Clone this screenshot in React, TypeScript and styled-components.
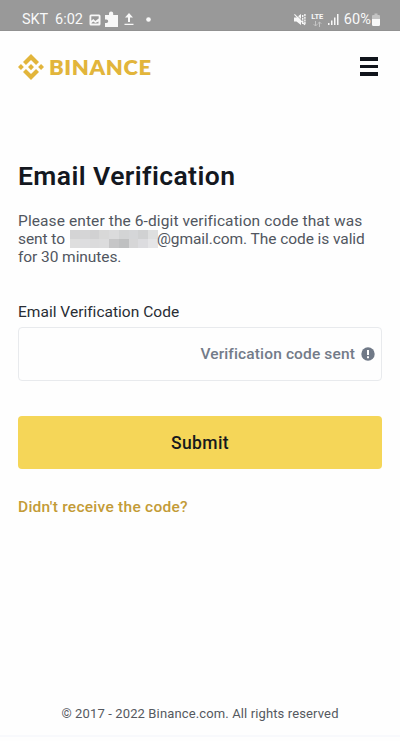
import React from 'react';
import styled, { createGlobalStyle } from 'styled-components';

const GlobalStyle = createGlobalStyle`
  * { box-sizing: border-box; }
  body { margin: 0; background: #fefefe; font-family: Roboto, "Noto Sans", sans-serif; }
`;

const Screen = styled.div`
  display: flex;
  flex-direction: column;
  width: 400px;
  height: 741px;
  overflow: hidden;
  background: #fefefe;
`;

const StatusBar = styled.div`
  display: flex;
  justify-content: space-between;
  flex: none;
  height: 31px;
  padding: 8px 20px 0 22px;
  background: #999;
  color: #f8f8f8;
  border-bottom: 1px solid #919191;
`;

const StatusGroup = styled.div`
  display: flex;
  align-items: center;
  height: 23px;
  white-space: nowrap;
`;

const StatusText = styled.span<{ $gap?: number; $spacing?: number }>`
  font-size: 14.5px;
  line-height: 20px;
  letter-spacing: ${p => p.$spacing ?? 0}px;
  margin-right: ${p => p.$gap ?? 0}px;
`;

const StatusIcon = styled.svg<{ $gap?: number }>`
  display: block;
  flex: none;
  margin-right: ${p => p.$gap ?? 0}px;
`;

const Network = styled.div`
  display: flex;
  flex-direction: column;
  align-items: center;
  width: 13px;
  margin-right: 4px;
  font-size: 7.5px;
  font-weight: 700;
  line-height: 8px;
`;

const Header = styled.header`
  display: flex;
  align-items: center;
  justify-content: space-between;
  flex: none;
  height: 71px;
  padding: 0 22px 0 18px;
`;

const Brand = styled.div`
  display: flex;
  align-items: center;
  gap: 4.5px;
  color: #e2b53b;
`;

const BrandName = styled.span`
  font-family: Lato, sans-serif;
  font-weight: 800;
  font-size: 20px;
  line-height: 26px;
  letter-spacing: 0.55px;
  transform: scaleX(1.1);
  transform-origin: left center;
`;

const MenuButton = styled.button`
  display: flex;
  flex-direction: column;
  gap: 4px;
  width: 18px;
  padding: 0;
  border: 0;
  background: none;
`;

const MenuLine = styled.span`
  height: 3.5px;
  background: #10141b;
`;

const Main = styled.main`
  display: flex;
  flex-direction: column;
  flex: 1;
  padding: 58px 18px 0;
`;

const Title = styled.h1`
  margin: 0 0 20px;
  color: #14181f;
  font-size: 26.5px;
  font-weight: 600;
  line-height: 32px;
  letter-spacing: 0.42px;
  white-space: nowrap;
`;

const Description = styled.p`
  margin: 0 0 36px;
  color: #515660;
  font-size: 15.5px;
  line-height: 18px;
`;

const Line = styled.span<{ $spacing: number }>`
  display: flex;
  align-items: center;
  height: 18px;
  white-space: pre;
  letter-spacing: ${p => p.$spacing}px;
`;

const Mosaic = styled.span`
  display: grid;
  grid-template-columns: repeat(9, 1fr);
  width: 88px;
  height: 18px;
  margin: 0 -1px 0 5px;
`;

const Tile = styled.span<{ $tone: string }>`
  background: ${p => p.$tone};
`;

const Label = styled.label`
  margin-bottom: 5px;
  color: #292d34;
  font-size: 15.5px;
  line-height: 20px;
  letter-spacing: 0.02px;
`;

const Field = styled.div`
  display: flex;
  align-items: center;
  justify-content: flex-end;
  height: 54px;
  padding-right: 6px;
  border: 1px solid #e8eaed;
  border-radius: 4px;
`;

const FieldStatus = styled.span`
  margin-right: 6px;
  color: #737b89;
  font-size: 15.5px;
  font-weight: 500;
  line-height: 20px;
  letter-spacing: 0.14px;
`;

const Submit = styled.button`
  height: 53px;
  margin-top: 35px;
  padding: 0;
  border: 0;
  border-radius: 4px;
  background: #f5d658;
  color: #16191d;
  font: 500 17.5px/24px Roboto, sans-serif;
  letter-spacing: 0.4px;
`;

const ResendLink = styled.a`
  align-self: flex-start;
  margin-top: 28px;
  color: #c39b37;
  font-size: 15.5px;
  font-weight: 500;
  line-height: 20px;
  letter-spacing: 0.27px;
`;

const Footer = styled.footer`
  flex: none;
  height: 35px;
  border-bottom: 2px solid #f8f9fc;
  margin-bottom: 4px;
  color: #555960;
  font-size: 13px;
  line-height: 24px;
  letter-spacing: 0.13px;
  text-align: center;
`;

const tiles = [
  '#d4d4d5', '#d5d5d6', '#d1d1d2', '#d8d8d8', '#dbdbdc', '#d3d4d5', '#d5d6d8', '#d0d1d2', '#dedfdf',
  '#dedede', '#dddddf', '#dbdbdc', '#dcdcdd', '#c6c6c7', '#bfc0c1', '#d6d6d7', '#dcdcdf', '#e5e5e7',
];

export default function App() {
  return (
    <>
      <GlobalStyle />
      <Screen>
        <StatusBar>
          <StatusGroup>
            <StatusText $gap={7} $spacing={-0.1}>SKT</StatusText>
            <StatusText $gap={6} $spacing={0}>6:02</StatusText>
            <StatusIcon width="12" height="12" viewBox="0 0 12 12" $gap={3}>
              <path fill="currentColor" fillRule="evenodd" d="M2 .5h8Q11.500.5 11.500 2v8q0 1.500-1.500 1.500H2Q.5 11.500.5 10V2Q.5.5 2 .5ZM2.300 2.300v4.400l2-1.700 2 2 3.400-2.400V2.300ZM2.500 9.600h7V7.400L6.300 9 4.300 7.500 2.500 9Z" />
            </StatusIcon>
            <StatusIcon width="15" height="17" viewBox="0 0 15 17" $gap={5}>
              <path fill="currentColor" d="M1 4h4V2.500a2.100 2.100 0 0 1 4.200 0V4H14v12H1v-4h1.500a1.700 1.700 0 0 0 0-3.400H1Z" />
            </StatusIcon>
            <StatusIcon width="10" height="13" viewBox="0 0 10 13" $gap={12}>
              <path fill="currentColor" d="M5 0 9 4.500H6v4.500H4V4.500H1ZM.5 10.700h9V12h-9Z" />
            </StatusIcon>
            <StatusIcon width="5" height="5" viewBox="0 0 5 5">
              <circle cx="2.500" cy="2.500" r="2.300" fill="currentColor" />
            </StatusIcon>
          </StatusGroup>
          <StatusGroup>
            <StatusIcon width="12" height="13" viewBox="0 0 12 13" $gap={5}>
              <path fill="currentColor" d="M0 4.500h2.500L7 1v11L2.500 8.500H0Z" />
              <path fill="none" stroke="#999" strokeWidth="1" d="m1 .5 11 11" />
              <path fill="none" stroke="currentColor" strokeWidth="1.200" d="m.4 1.400 10.500 10.500" />
              <path fill="none" stroke="currentColor" strokeWidth="1.400" strokeDasharray="2 .7" d="M8.700 2v9M10.900 1v11" />
            </StatusIcon>
            <Network>
              LTE
              <svg width="9" height="6" viewBox="0 0 9 6" fill="none" stroke="#c5c5c5">
                <path d="M2.500 0v5M.7 3.200l1.800 1.800 1.800-1.800M6.500 6V1M4.700 2.800 6.500 1l1.800 1.800" />
              </svg>
            </Network>
            <StatusIcon width="11" height="11" viewBox="0 0 11 11" $gap={5}>
              <path fill="currentColor" d="M0 9h1.500v2H0ZM3 6.500h1.500V11H3ZM6 3.500h1.500V11H6ZM9 0h1.500v11H9Z" />
            </StatusIcon>
            <StatusText $gap={1} $spacing={0.1}>60%</StatusText>
            <StatusIcon width="8" height="13" viewBox="0 0 8 13">
              <path fill="#c3c3c3" d="M2.500.5h3V2H7q1 0 1 1v3H0V3q0-1 1-1h1.500Z" />
              <path fill="currentColor" d="M0 6h8v5.500Q8 13 6.700 13H1.300Q0 13 0 11.500Z" />
            </StatusIcon>
          </StatusGroup>
        </StatusBar>
        <Header>
          <Brand>
            <svg width="26" height="26" viewBox="0 0 126.61 126.61" fill="currentColor">
              <path d="m38.73 53.200 24.590-24.580 24.600 24.600 14.300-14.310L63.320 0l-38.900 38.900ZM0 63.310 14.300 49l14.310 14.310-14.310 14.300ZM38.730 73.410 63.320 98l24.600-24.600 14.310 14.290-38.910 38.910-38.900-38.880ZM98 63.310 112.300 49l14.310 14.300-14.310 14.320ZM77.830 63.300 63.320 78.710 48.800 63.310 63.320 48.780Z" />
            </svg>
            <BrandName>BINANCE</BrandName>
          </Brand>
          <MenuButton aria-label="Menu"><MenuLine /><MenuLine /><MenuLine /></MenuButton>
        </Header>
        <Main>
          <Title>Email Verification</Title>
          <Description>
            <Line $spacing={0.1}>Please enter the 6-digit verification code that was</Line>
            <Line $spacing={-0.07}>
              sent to
              <Mosaic>{tiles.map((tone, i) => <Tile key={i} $tone={tone} />)}</Mosaic>
              @gmail.com. The code is valid
            </Line>
            <Line $spacing={-0.07}>for 30 minutes.</Line>
          </Description>
          <Label>Email Verification Code</Label>
          <Field>
            <FieldStatus>Verification code sent</FieldStatus>
            <svg width="14" height="14" viewBox="0 0 14 14">
              <circle cx="7" cy="7" r="6.700" fill="#707987" />
              <path fill="#fff" d="M6 3h2v5H6ZM6 9.300h2v1.900H6Z" />
            </svg>
          </Field>
          <Submit>Submit</Submit>
          <ResendLink>Didn't receive the code?</ResendLink>
        </Main>
        <Footer>© 2017 - 2022 Binance.com. All rights reserved</Footer>
      </Screen>
    </>
  );
}
